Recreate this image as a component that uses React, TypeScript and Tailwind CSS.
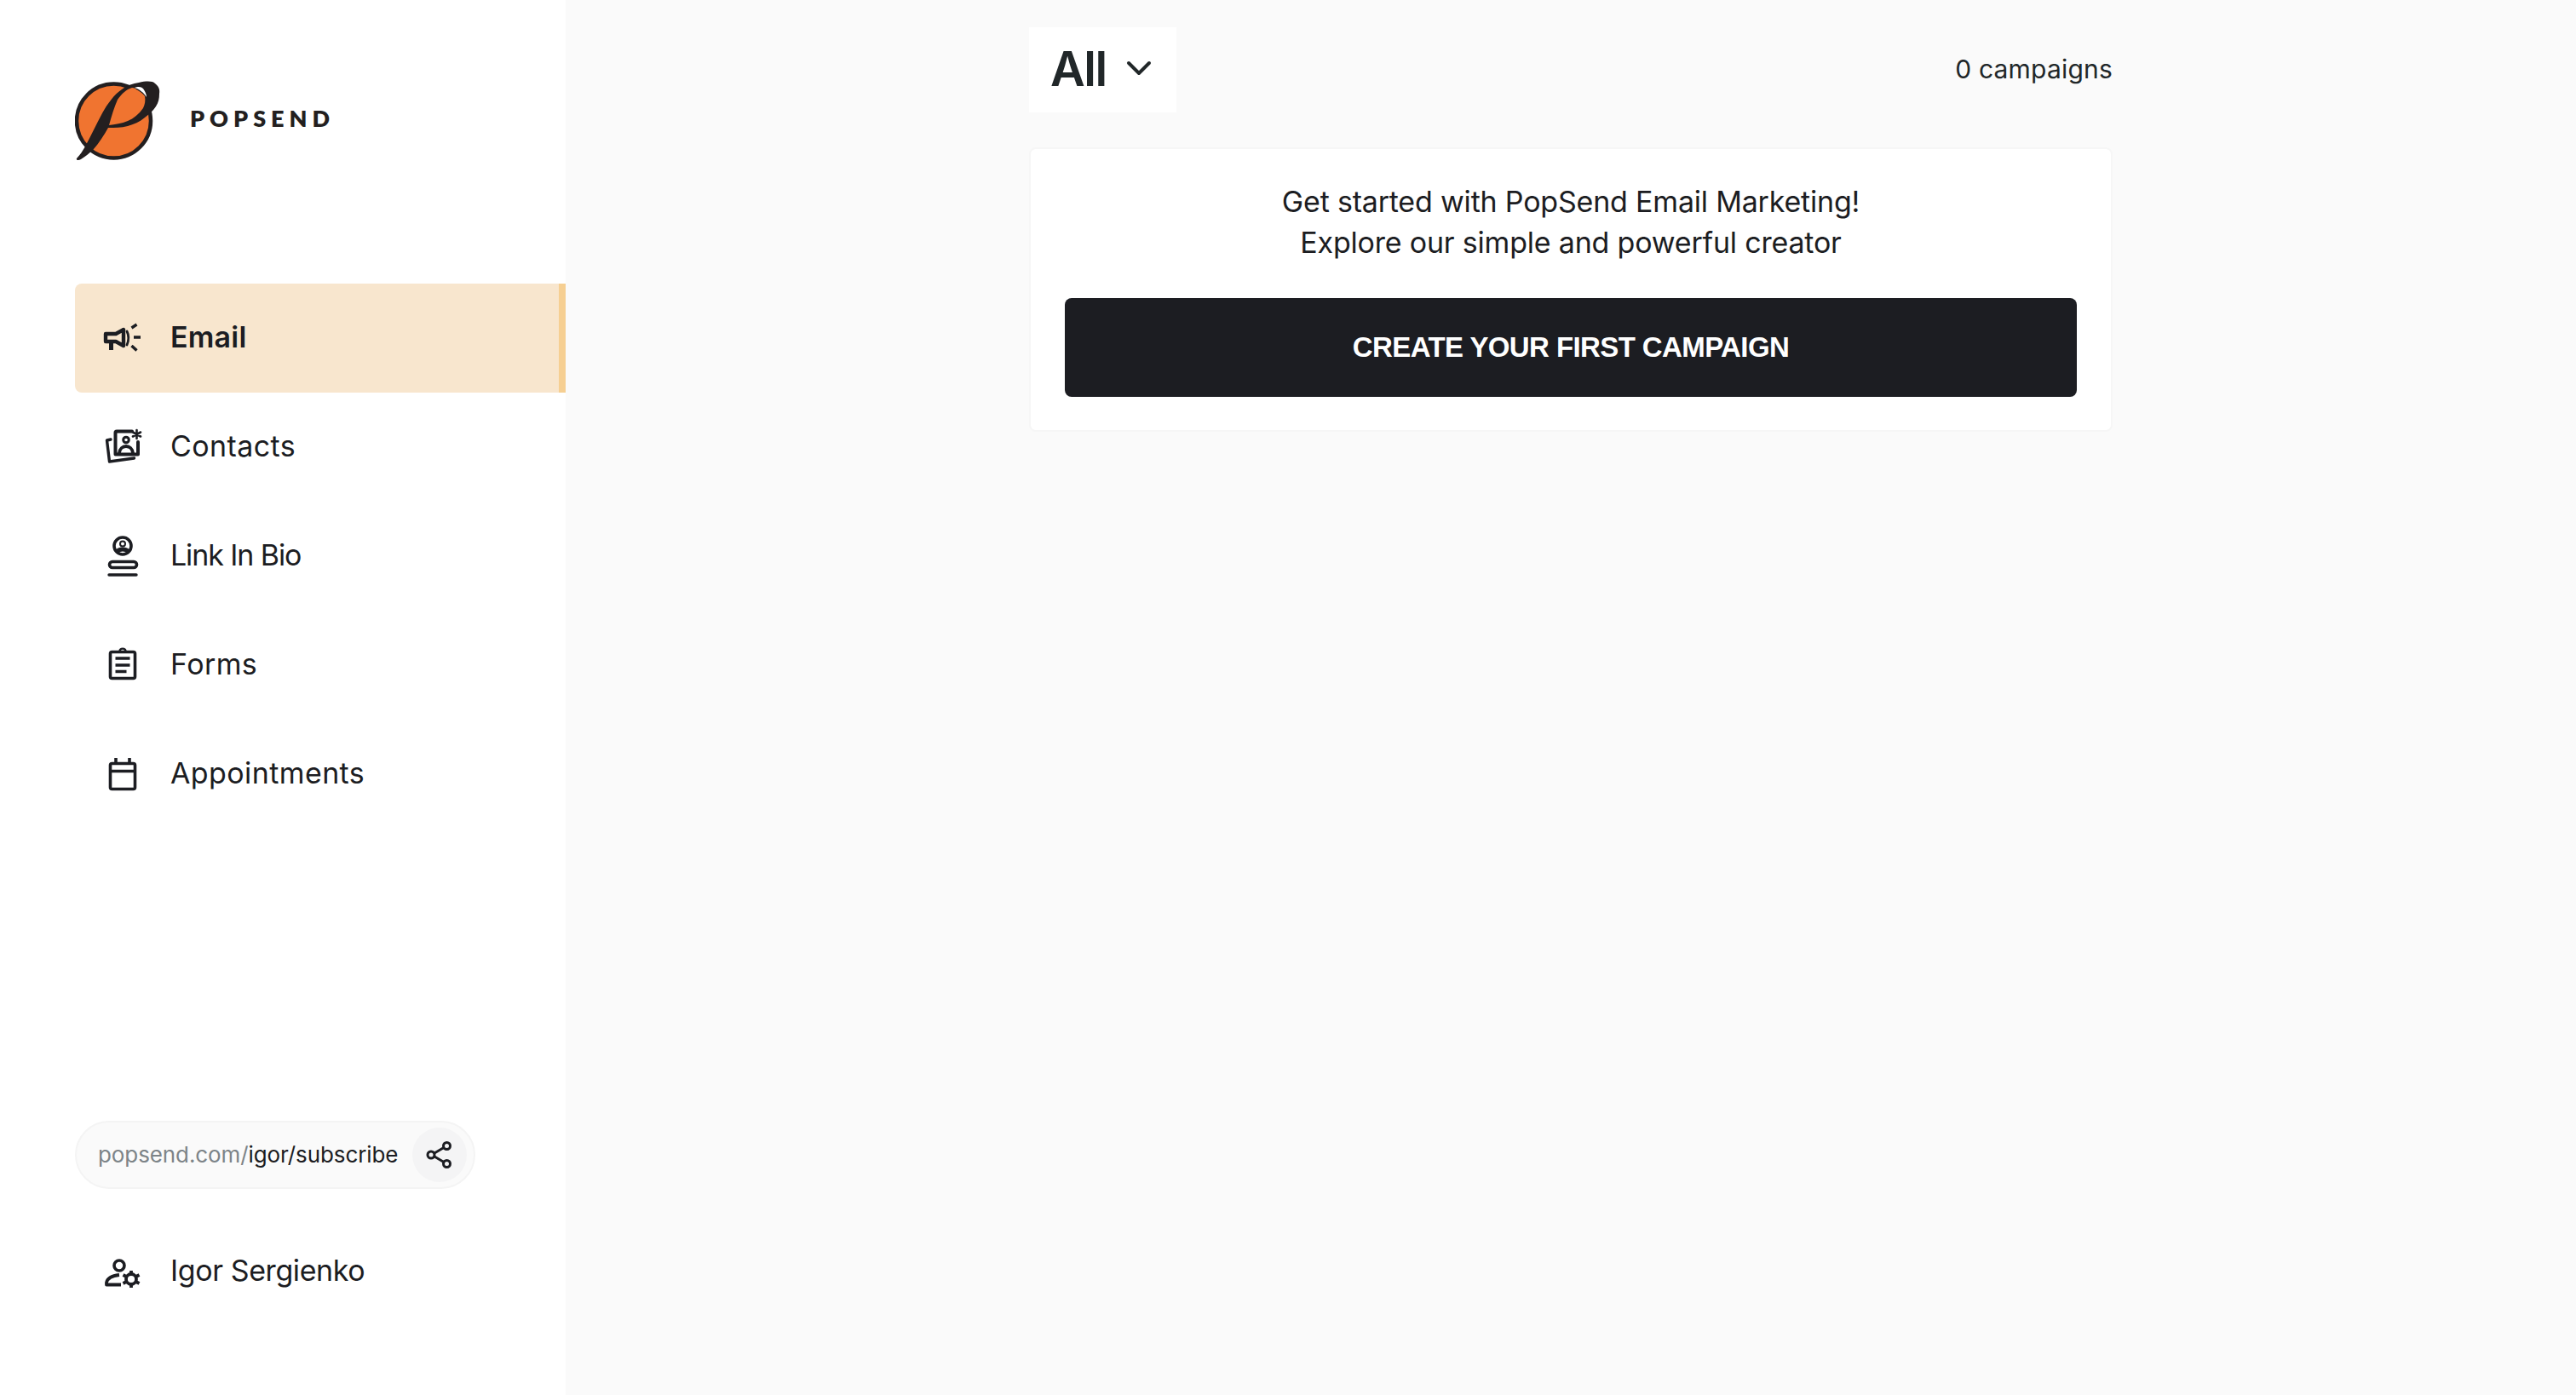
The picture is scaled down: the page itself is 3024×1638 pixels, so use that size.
import { ChevronDown } from "lucide-react";
import type { ReactNode } from "react";

const ink = "#1c1d22";

function Icon({ children }: { children: ReactNode }) {
  return (
    <svg width="48" height="48" viewBox="0 0 48 48" fill="none" stroke={ink} strokeWidth="3.6" strokeLinecap="round" strokeLinejoin="round" className="shrink-0">
      {children}
    </svg>
  );
}

function Logo() {
  return (
    <svg width="104" height="100" viewBox="0 0 104 100" className="shrink-0">
      <circle cx="45.5" cy="49" r="43.5" fill="#f07430" stroke="#231f20" strokeWidth="4.5" />
      <path d="M2 93 C6 89 9 84 12 79 C19 66 25 53 32 40 C38 29 46 18 55 12 C62 7 68 5 75 4 C84 2 91 2 94 5 C98 8 100 12 99 17 C99 23 98 27 95 32 C92 37 87 41 82 45 C76 50 69 53 62 55 C54 57 47 57 39 57 C34 66 28 75 22 82 C17 87 12 91 7 94 C4 96 1 95 2 93 Z" fill="#231f20" />
      <path d="M40 54 C43 43 46 33 50 24 C55 17 60 12 67 10 C70 10 71 11 72 12 C76 14 80 17 82 20 C83 25 82 30 80 34 C75 41 69 46 62 49 C55 52 47 53 40 54 Z" fill="#f07430" />
      <path d="M70 10 C75 8 78 9 80 11 C82 14 84 17 84 21 C81 16 76 12 70 10 Z" fill="#fff" />
    </svg>
  );
}

const items: { label: string; active?: boolean; tight?: boolean; icon: ReactNode }[] = [
  {
    label: "Email",
    active: true,
    icon: (
      <>
        <path d="M4 19h12l9-5v19l-9-5H4z" strokeWidth="4.400" />
        <path d="M10.500 29v9" strokeWidth="5" strokeLinecap="butt" />
        <path d="M29 16c2.500 5 2.500 10 0 16" strokeWidth="2.800" />
        <path d="M34.500 12l6-4M37 23h8M34.500 33l6 5.500" strokeWidth="3.400" strokeLinecap="butt" />
      </>
    ),
  },
  {
    label: "Contacts",
    icon: (
      <>
        <path d="M35 5.500H17a1.500 1.500 0 0 0-1.500 1.500v25.500h26.500V18" strokeWidth="4" />
        <circle cx="28" cy="15.500" r="3.300" strokeWidth="3" />
        <path d="M20 31c.500-5 4-8 8-8s7.500 3 8 8" strokeWidth="3.800" />
        <path d="M10 15l-4.500 1 3 25 29-4" strokeWidth="3.400" />
        <path d="M40.500 4v10M36 6.500l9 5M45 6.500l-9 5" strokeWidth="2.600" />
      </>
    ),
  },
  {
    label: "Link In Bio",
    tight: true,
    icon: (
      <>
        <circle cx="24" cy="12" r="10" />
        <circle cx="24" cy="9.500" r="3" strokeWidth="2" />
        <path d="M17 19c3-4 11-4 14 0" strokeWidth="5" strokeLinecap="butt" />
        <rect x="8.500" y="30.500" width="32" height="7" rx="3.500" />
        <path d="M8 46h32" strokeWidth="3.400" />
      </>
    ),
  },
  {
    label: "Forms",
    icon: (
      <>
        <rect x="9.500" y="8.500" width="29" height="31" rx="2" />
        <path d="M20.500 8c0-4.500 7-4.500 7 0" strokeWidth="2.400" />
        <path d="M15.500 16h17M15.500 24h17M15.500 31.500h13" strokeLinecap="butt" />
      </>
    ),
  },
  {
    label: "Appointments",
    icon: (
      <>
        <rect x="9.500" y="11.500" width="29" height="30" rx="2" />
        <path d="M9.500 20.500h29M16 5v6M32 5v6" strokeLinecap="butt" />
      </>
    ),
  },
];

function NavRow({ label, active, tight, icon }: { label: string; active?: boolean; tight?: boolean; icon: ReactNode }) {
  let labelClass = "pb-[3px] text-[34px] tracking-[0.4px] text-[#1c1d22]";
  if (active) labelClass = "pb-[3px] text-[34px] font-semibold tracking-[0.2px] text-[#1c1d22]";
  if (tight) labelClass = "pb-[3px] text-[34px] tracking-[-1.100px] text-[#1c1d22]";
  return (
    <div
      className={
        active
          ? "flex h-[128px] items-center gap-[32px] rounded-l-[8px] border-r-[8px] border-[#f6cf92] bg-[#f8e6ce] pl-[32px]"
          : "flex h-[128px] items-center gap-[32px] pl-[32px]"
      }
    >
      <Icon>{icon}</Icon>
      <span className={labelClass}>{label}</span>
    </div>
  );
}

export default function App() {
  return (
    <div className="flex h-screen w-full bg-[#fafafa] font-['Inter',sans-serif] text-[#1c1d22]">
      <aside className="flex w-[664px] shrink-0 flex-col bg-white pl-[88px]">
        <div className="flex items-center gap-[31px] pt-[93px]">
          <Logo />
          <span className="mb-[8px] font-['Lato',sans-serif] text-[27px] font-extrabold tracking-[0.22em] text-[#231f20]">POPSEND</span>
        </div>
        <nav className="mt-[140px] flex flex-col">
          {items.map((it) => (
            <NavRow key={it.label} {...it} />
          ))}
        </nav>
        <div className="mt-auto flex h-[80px] w-[470px] items-center justify-between rounded-full border-2 border-[#f4f4f4] bg-[#fafafa] pl-[25px] pr-[8px]">
          <span className="pb-[2px] text-[26px] tracking-[-0.1px]">
            <span className="text-[#7d8488]">popsend.com/</span>igor/subscribe
          </span>
          <span className="flex h-[64px] w-[64px] items-center justify-center rounded-full bg-[#f4f4f5]">
            <svg width="34" height="34" viewBox="0 0 34 34" fill="none" stroke={ink} strokeWidth="3">
              <circle cx="25.500" cy="6.500" r="4" />
              <circle cx="7" cy="17" r="4" />
              <circle cx="25.500" cy="27.500" r="4" />
              <path d="M11 15l11-6.500M11 19l11 6.500" />
            </svg>
          </span>
        </div>
        <div className="mb-[113px] mt-[65px] flex h-[64px] items-center gap-[32px] pl-[32px]">
          <Icon>
            <circle cx="20" cy="17" r="6" />
            <path d="M20 28c-9 1-14 4-15 9v2.500h17" strokeWidth="3.800" strokeLinecap="butt" />
            <path d="M34 23v20M24.500 28l19 10M24.500 38l19-10" strokeWidth="3.800" strokeLinecap="butt" />
            <circle cx="34" cy="33" r="6" fill="#fff" strokeWidth="3.800" />
          </Icon>
          <span className="pb-[3px] text-[34px] tracking-[-0.4px]">Igor Sergienko</span>
        </div>
      </aside>
      <main className="flex flex-1 justify-center pt-[32px]">
        <div className="w-[1272px]">
          <div className="flex items-center justify-between">
            <div className="flex h-[100px] w-[173px] items-center gap-[14px] bg-white pl-[25px]">
              <span className="pb-[2px] text-[56px] font-semibold tracking-[-1.5px] text-[#212729]">All</span>
              <ChevronDown size={48} strokeWidth={2} color="#212729" className="mb-[4px]" />
            </div>
            <span className="pb-[2px] text-[30px] tracking-[0.2px] text-[#212729]">0 campaigns</span>
          </div>
          <section className="mt-[41px] flex w-[1272px] flex-col rounded-[8px] border-2 border-[#f6f6f6] bg-white px-[40px] pb-[39px] pt-[38px]">
            <p className="text-center text-[34px] leading-[48px] tracking-[-0.2px]">
              Get started with PopSend Email Marketing!
              <br />
              Explore our simple and powerful creator
            </p>
            <button className="mt-[41px] h-[116px] rounded-[8px] bg-[#1c1d22] font-['Liberation_Sans',sans-serif] text-[33px] font-bold tracking-[-0.6px] text-white">
              CREATE YOUR FIRST CAMPAIGN
            </button>
          </section>
        </div>
      </main>
    </div>
  );
}
